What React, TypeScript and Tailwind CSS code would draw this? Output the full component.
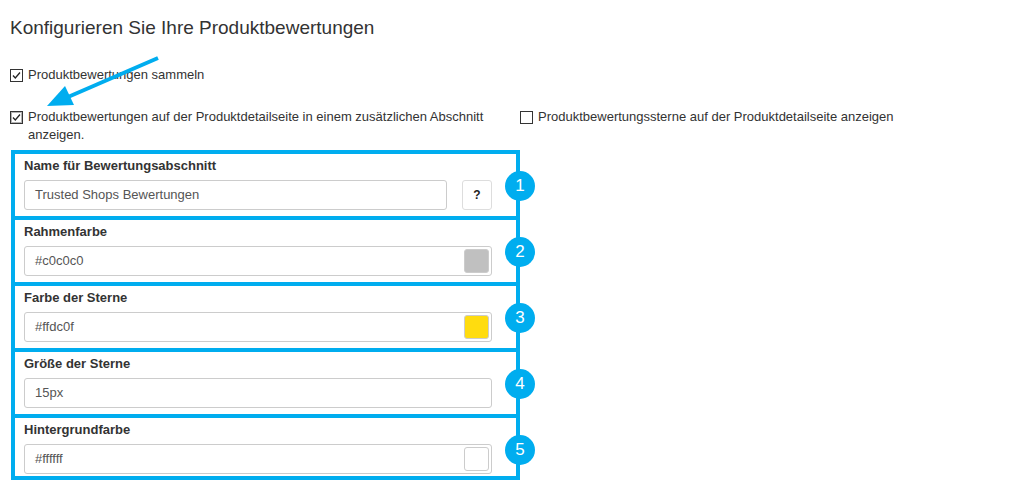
import React from 'react'

const BLUE = '#00adef'

function CheckBox({ checked, focused }: { checked?: boolean; focused?: boolean }) {
  return (
    <svg width="13" height="13" viewBox="0 0 13 13" className="shrink-0">
      <rect x="0.5" y="0.5" width="12" height="12" fill="#fff" stroke="#333" />
      {focused && (
        <rect x="1.5" y="1.5" width="10" height="10" fill="none" stroke="#666" strokeDasharray="1 1" />
      )}
      {checked && <path d="M3 6.5 L5.3 9 L10 3.5" fill="none" stroke="#222" strokeWidth="1.3" />}
    </svg>
  )
}

interface Field {
  label: string
  value: string
  swatch?: string
  help?: boolean
}

const fields: Field[] = [
  { label: 'Name für Bewertungsabschnitt', value: 'Trusted Shops Bewertungen', help: true },
  { label: 'Rahmenfarbe', value: '#c0c0c0', swatch: '#c0c0c0' },
  { label: 'Farbe der Sterne', value: '#ffdc0f', swatch: '#ffdc0f' },
  { label: 'Größe der Sterne', value: '15px' },
  { label: 'Hintergrundfarbe', value: '#ffffff', swatch: '#ffffff' },
]

export default function App() {
  return (
    <div
      className="relative w-[1012px] h-[498px] bg-white text-[#333] overflow-hidden"
      style={{ fontFamily: '"Liberation Sans", Arial, sans-serif' }}
    >
      <h2 className="pt-[18px] pl-[10px] text-[19px] leading-[20px] font-normal">
        Konfigurieren Sie Ihre Produktbewertungen
      </h2>

      {/* Checkboxen */}
      <div className="mt-[28px] ml-[10px] flex items-center gap-[5px] text-[13px] leading-[18px]">
        <CheckBox checked />
        <span>Produktbewertungen sammeln</span>
      </div>

      <div className="mt-[24px] ml-[10px] flex text-[13px] leading-[18px]">
        <div className="w-[500px] flex items-start gap-[5px]">
          <div className="mt-[3px]">
            <CheckBox checked focused />
          </div>
          <span className="w-[475px]">
            Produktbewertungen auf der Produktdetailseite in einem zusätzlichen Abschnitt anzeigen.
          </span>
        </div>
        <div className="ml-[10px] flex items-start gap-[5px]">
          <div className="mt-[3px]">
            <CheckBox />
          </div>
          <span>Produktbewertungssterne auf der Produktdetailseite anzeigen</span>
        </div>
      </div>

      {/* Felder */}
      <div className="mt-[6px] ml-[11px] w-[509px]">
        {fields.map((f, i) => {
          const last = i === fields.length - 1
          return (
            <div
              key={f.label}
              className={`relative border-x-4 border-t-4 border-[#00adef] pl-[9px] pr-[24px] pt-[2px] ${
                last ? 'border-b-4 pb-[2px]' : 'pb-[6px]'
              }`}
            >
              <div className="text-[13px] leading-[20px] font-bold mb-[4px]">{f.label}</div>
              <div className="flex gap-[15px]">
                <div className="relative flex-1 h-[30px] border border-[#ccc] rounded-[3px] flex items-center pl-[10px] text-[13px] text-[#555]">
                  {f.value}
                  {f.swatch && (
                    <div
                      className="absolute right-[2px] top-[2px] w-[25px] h-[24px] rounded-[3px] border border-[#ccc]"
                      style={{ backgroundColor: f.swatch }}
                    />
                  )}
                </div>
                {f.help && (
                  <div className="w-[30px] h-[30px] border border-[#ddd] rounded-[3px] flex items-center justify-center text-[12px] font-bold text-[#222]">
                    ?
                  </div>
                )}
              </div>
              <div className="absolute right-[-19px] top-[17px] w-[30px] h-[30px] rounded-full bg-[#00adef] text-white text-[17px] flex items-center justify-center">
                {i + 1}
              </div>
            </div>
          )
        })}
      </div>

      {/* Pfeil */}
      <svg className="absolute left-0 top-0 pointer-events-none" width="1012" height="498">
        <line x1="158" y1="58" x2="68" y2="97" stroke={BLUE} strokeWidth="4" />
        <polygon points="47,106 65,86 74,105" fill={BLUE} />
      </svg>
    </div>
  )
}
